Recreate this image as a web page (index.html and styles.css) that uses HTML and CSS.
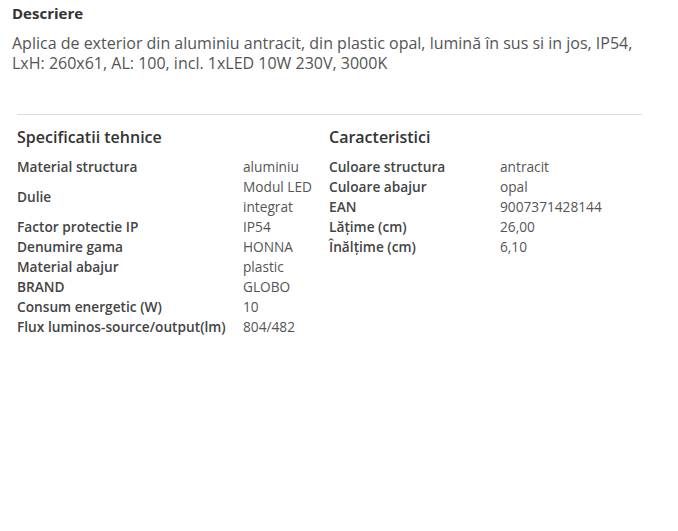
FILE: index.html
```html
<!DOCTYPE html>
<html lang="ro">
<head>
<meta charset="utf-8">
<link rel="stylesheet" href="styles.css">
</head>
<body>
<div class="page">
  <section class="desc">
    <h3 class="desc-title">Descriere</h3>
    <p class="desc-text">Aplica de exterior din aluminiu antracit, din plastic opal, lumină în sus si in jos, IP54, LxH: 260x61, AL: 100, incl. 1xLED 10W 230V, 3000K</p>
  </section>
  <div class="specs">
    <div class="col col-left">
      <h4 class="col-title">Specificatii tehnice</h4>
      <table class="spec-table">
        <colgroup><col class="lbl-left"><col class="val-left"></colgroup>
        <tr><th>Material structura</th><td>aluminiu</td></tr>
        <tr><th>Dulie</th><td>Modul LED integrat</td></tr>
        <tr><th>Factor protectie IP</th><td>IP54</td></tr>
        <tr><th>Denumire gama</th><td>HONNA</td></tr>
        <tr><th>Material abajur</th><td>plastic</td></tr>
        <tr><th>BRAND</th><td>GLOBO</td></tr>
        <tr><th>Consum energetic (W)</th><td>10</td></tr>
        <tr><th>Flux luminos-source/output(lm)</th><td>804/482</td></tr>
      </table>
    </div>
    <div class="col col-right">
      <h4 class="col-title">Caracteristici</h4>
      <table class="spec-table">
        <colgroup><col class="lbl-right"><col class="val-right"></colgroup>
        <tr><th>Culoare structura</th><td>antracit</td></tr>
        <tr><th>Culoare abajur</th><td>opal</td></tr>
        <tr><th>EAN</th><td>9007371428144</td></tr>
        <tr><th>Lăţime (cm)</th><td>26,00</td></tr>
        <tr><th>Înălţime (cm)</th><td>6,10</td></tr>
      </table>
    </div>
  </div>
</div>
</body>
</html>
```

FILE: styles.css
```css
html, body {
  margin: 0;
  padding: 0;
  background: #fff;
}
body {
  font-family: "Open Sans", "DejaVu Sans", sans-serif;
  color: #555;
}
.page {
  padding: 3px 0 0 12px;
}
.desc-title {
  margin: 0;
  font-size: 15px;
  font-weight: 700;
  line-height: 20px;
  color: #333;
}
.desc-text {
  margin: 10px 0 0;
  font-size: 16px;
  line-height: 20px;
  color: #555;
  width: 640px;
}
.specs {
  margin: 41px 0 0 5px;
  width: 625px;
  border-top: 1px solid #ddd;
  display: grid;
  grid-template-columns: 312px 313px;
}
.col-title {
  margin: 11px 0 9px;
  font-size: 16px;
  font-weight: 600;
  line-height: 22px;
  color: #333;
}
.spec-table {
  border-collapse: collapse;
  font-size: 13.7px;
  line-height: 20px;
}
.spec-table th,
.spec-table td {
  padding: 0;
  text-align: left;
  vertical-align: middle;
}
.spec-table th {
  font-weight: 600;
  color: #444;
}
.spec-table td {
  color: #555;
}
.lbl-left { width: 226px; }
.val-left { width: 76px; }
.lbl-right { width: 171px; }
.val-right { width: 130px; }
.col-left .spec-table { width: 302px; table-layout: fixed; }
.col-right .spec-table { width: 301px; table-layout: fixed; }
```
